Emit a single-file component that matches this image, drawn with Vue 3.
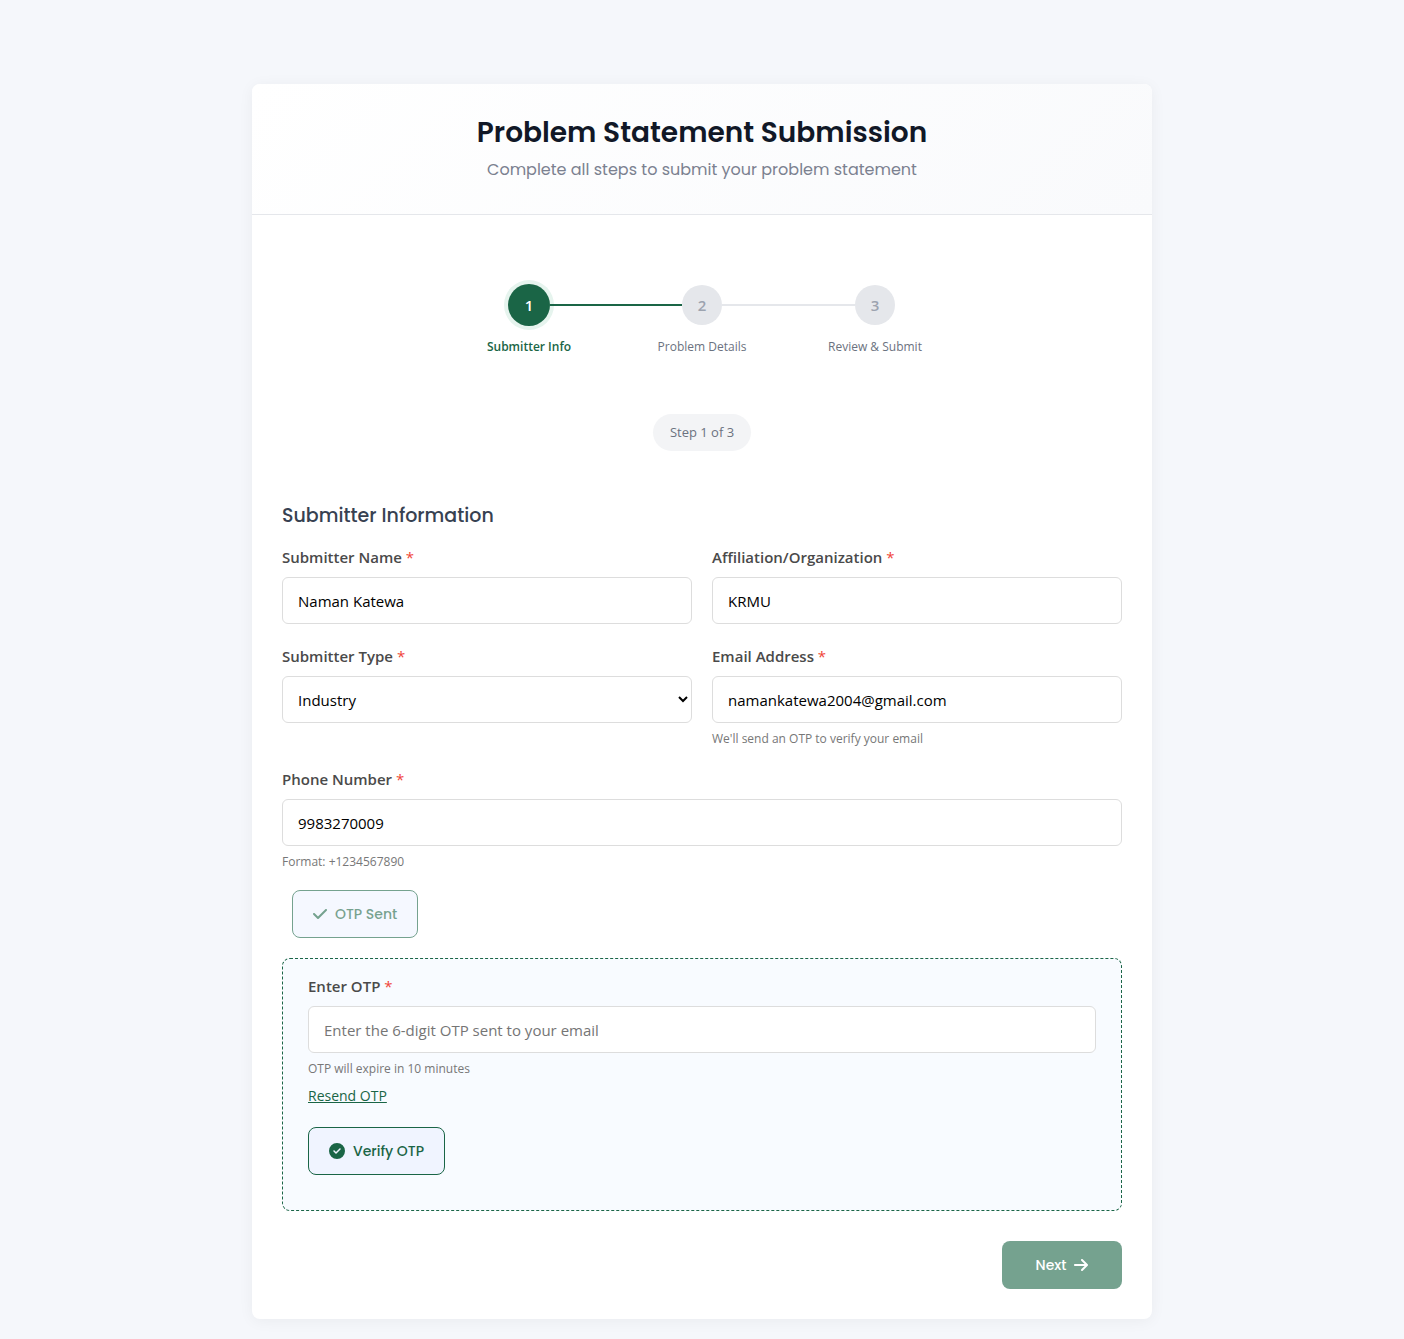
<script setup>
import { reactive } from 'vue'

const steps = [
  { number: 1, label: 'Submitter Info', state: 'active' },
  { number: 2, label: 'Problem Details', state: 'reached' },
  { number: 3, label: 'Review & Submit', state: 'upcoming' },
]

const form = reactive({
  name: 'Naman Katewa',
  organization: 'KRMU',
  type: 'Industry',
  email: 'namankatewa2004@gmail.com',
  phone: '9983270009',
  otp: '',
})
</script>

<template>
  <main class="page">
    <div class="card">
      <header class="card-header">
        <h1>Problem Statement Submission</h1>
        <p>Complete all steps to submit your problem statement</p>
      </header>

      <div class="card-body">
        <ol class="steps">
          <li v-for="step in steps" :key="step.number" class="step" :class="step.state">
            <div class="track">
              <span class="line"></span>
              <span class="circle">{{ step.number }}</span>
              <span class="line"></span>
            </div>
            <span class="step-label">{{ step.label }}</span>
          </li>
        </ol>
        <div class="progress"><span class="pill">Step 1 of 3</span></div>

        <form @submit.prevent>
          <h2>Submitter Information</h2>
          <div class="row">
            <div class="field">
              <label for="name">Submitter Name <span class="req">*</span></label>
              <input id="name" v-model="form.name" type="text" />
            </div>
            <div class="field">
              <label for="organization">Affiliation/Organization <span class="req">*</span></label>
              <input id="organization" v-model="form.organization" type="text" />
            </div>
          </div>
          <div class="row">
            <div class="field">
              <label for="type">Submitter Type <span class="req">*</span></label>
              <select id="type" v-model="form.type">
                <option>Industry</option>
                <option>Academia</option>
              </select>
            </div>
            <div class="field">
              <label for="email">Email Address <span class="req">*</span></label>
              <input id="email" v-model="form.email" type="email" />
              <small>We'll send an OTP to verify your email</small>
            </div>
          </div>
          <div class="row">
            <div class="field">
              <label for="phone">Phone Number <span class="req">*</span></label>
              <input id="phone" v-model="form.phone" type="tel" />
              <small>Format: +1234567890</small>
            </div>
          </div>

          <button type="button" class="btn outline sent" disabled>
            <svg class="icon" viewBox="0 0 448 512" width="14" height="16" fill="currentColor" aria-hidden="true">
              <path d="M438.600 105.400c12.500 12.500 12.500 32.800 0 45.300l-256 256c-12.500 12.500-32.800 12.500-45.300 0l-128-128c-12.500-12.500-12.500-32.800 0-45.300s32.800-12.500 45.300 0L160 338.700 393.400 105.400c12.500-12.500 32.800-12.500 45.300 0z" />
            </svg>
            OTP Sent
          </button>

          <section class="otp-box">
            <div class="field">
              <label for="otp">Enter OTP <span class="req">*</span></label>
              <input id="otp" v-model="form.otp" type="text" placeholder="Enter the 6-digit OTP sent to your email" />
              <small>OTP will expire in 10 minutes</small>
            </div>
            <a class="resend" href="#">Resend OTP</a>
            <button type="button" class="btn outline">
              <svg class="icon" viewBox="0 0 512 512" width="16" height="16" fill="currentColor" aria-hidden="true">
                <path d="M256 512A256 256 0 1 0 256 0a256 256 0 1 0 0 512zM369 209L241 337c-9.400 9.400-24.600 9.400-33.900 0l-64-64c-9.400-9.400-9.400-24.600 0-33.900s24.600-9.400 33.900 0l47 47L335 175c9.400-9.400 24.600-9.400 33.900 0s9.400 24.600 0 33.900z" />
              </svg>
              Verify OTP
            </button>
          </section>

          <div class="actions">
            <button type="submit" class="btn next" disabled>
              Next
              <svg class="icon" viewBox="0 0 448 512" width="14" height="16" fill="currentColor" aria-hidden="true">
                <path d="M438.600 278.600c12.500-12.500 12.500-32.800 0-45.300l-160-160c-12.500-12.500-32.800-12.500-45.300 0s-12.500 32.800 0 45.300L338.800 224 32 224c-17.700 0-32 14.300-32 32s14.300 32 32 32l306.700 0L233.400 393.400c-12.500 12.500-12.500 32.800 0 45.300s32.800 12.500 45.300 0l160-160z" />
              </svg>
            </button>
          </div>
        </form>
      </div>
    </div>
  </main>
</template>

<style>
body {
  background: #f5f7fb;
}
</style>

<style scoped>
* {
  box-sizing: border-box;
}
.page {
  padding: 84px 20px 20px;
  font-family: 'Segoe UI', 'Open Sans', 'Noto Sans', sans-serif;
  font-size: 15px;
  color: #4a4a4a;
}
.card {
  max-width: 900px;
  margin: 0 auto;
  background: #fff;
  border-radius: 8px;
  box-shadow: 0 2px 15px rgba(0, 0, 0, 0.05);
  overflow: hidden;
}
.card-header {
  padding: 30px 30px 32px;
  text-align: center;
  background: linear-gradient(135deg, #fff, #f9fafc);
  border-bottom: 1px solid #e5e7eb;
}
h1,
h2,
.card-header p,
.btn {
  font-family: Poppins, Inter, sans-serif;
}
h1 {
  margin: 0 0 6px;
  font-size: 28px;
  line-height: 38px;
  font-weight: 600;
  color: #111827;
}
.card-header p {
  margin: 0;
  font-size: 16px;
  line-height: 24px;
  color: #7b8190;
}
.card-body {
  padding: 69px 30px 30px;
}
.steps {
  display: grid;
  grid-template-columns: repeat(3, 1fr);
  max-width: 519px;
  margin: 0 auto;
  padding: 0;
  list-style: none;
}
.step {
  text-align: center;
}
.track {
  display: flex;
  align-items: center;
  height: 42px;
}
.line {
  flex: 1;
  height: 2px;
  background: #e5e7eb;
}
.active .line,
.reached .line:first-child {
  background: #1a6546;
}
.step:first-child .line:first-child,
.step:last-child .line:last-child {
  visibility: hidden;
}
.circle {
  width: 40px;
  height: 40px;
  border-radius: 50%;
  background: #e5e7eb;
  color: #9ca3af;
  font-weight: 600;
  line-height: 40px;
}
.active .circle {
  width: 42px;
  height: 42px;
  line-height: 42px;
  background: #1a6546;
  color: #fff;
  box-shadow: 0 0 0 4px #e6f4ee;
}
.step-label {
  display: block;
  margin-top: 11px;
  font-size: 12px;
  line-height: 20px;
  color: #6b7280;
}
.active .step-label {
  font-weight: 600;
  color: #1a6546;
}
.progress {
  margin: 57px 0 48px;
  text-align: center;
}
.pill {
  display: inline-block;
  padding: 8px 17px;
  border-radius: 20px;
  background: #f3f4f6;
  color: #6b7280;
  font-size: 13px;
  line-height: 21px;
}
h2 {
  margin: 0 0 12px;
  font-size: 19px;
  line-height: 34px;
  font-weight: 500;
  color: #374151;
}
.row {
  display: flex;
  gap: 20px;
  margin-bottom: 20px;
}
.field {
  flex: 1;
  min-width: 0;
}
label {
  display: block;
  margin-bottom: 8px;
  line-height: 24px;
  font-weight: 600;
}
.req {
  color: #f04438;
  font-weight: 400;
}
input,
select {
  display: block;
  width: 100%;
  height: 47px;
  padding: 12px 15px;
  border: 1px solid #ddd;
  border-radius: 6px;
  background: #fff;
  color: #000;
  font: inherit;
}
select {
  padding: 0 11px;
}
input::placeholder {
  color: #757575;
}
small {
  display: block;
  margin-top: 7px;
  font-size: 12px;
  line-height: 17px;
  color: #777;
}
.btn {
  display: inline-flex;
  align-items: center;
  justify-content: center;
  gap: 8px;
  height: 48px;
  padding: 0 20px;
  border: 1px solid transparent;
  border-radius: 8px;
  font-size: 14px;
  font-weight: 500;
}
.icon {
  flex: none;
}
.outline {
  border-color: #1a6546;
  background: #f0f4ff;
  color: #1a6546;
}
.sent {
  display: flex;
  margin: 0 0 20px 10px;
  opacity: 0.6;
}
.otp-box {
  padding: 15px 25px 35px;
  border: 1px dashed #1a6546;
  border-radius: 8px;
  background: #f8fbff;
}
.resend {
  display: table;
  margin: 8px 0 20px;
  font-size: 14px;
  line-height: 22px;
  color: #1a6546;
}
.actions {
  display: flex;
  justify-content: flex-end;
  margin-top: 30px;
}
.next {
  width: 120px;
  background: #1a6546;
  color: #fff;
  opacity: 0.6;
}
</style>
